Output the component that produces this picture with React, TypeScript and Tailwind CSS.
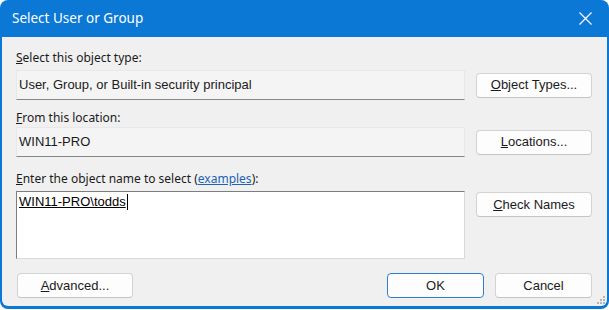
const ui = "font-['Noto_Sans',sans-serif]"
const ms = "font-['Liberation_Sans',Arial,sans-serif]"

function Btn({
  children,
  className = "",
  primary = false,
}: {
  children: React.ReactNode
  className?: string
  primary?: boolean
}) {
  return (
    <div
      className={`h-[25px] flex items-center justify-center rounded-[4px] bg-[#fdfdfd] text-[13px] text-[#1b1b1b] ${ms} ${
        primary ? "border border-[#2f7fcf]" : "border border-[#d3d3d3] border-b-[#c4c4c4]"
      } ${className}`}
    >
      {children}
    </div>
  )
}

function Field({ value }: { value: string }) {
  return (
    <div
      className={`flex-1 h-[30px] flex items-center pl-[2px] bg-[#f4f4f4] border border-[#e8e8e8] border-b-[#878787] text-[13px] text-[#1b1b1b] ${ms}`}
    >
      {value}
    </div>
  )
}

// little dotted size grip in the bottom right corner
function Grip() {
  const dots = [
    [6, 0],
    [3, 3],
    [6, 3],
    [0, 6],
    [3, 6],
    [6, 6],
  ]
  return (
    <svg width="8" height="8" viewBox="0 0 8 8" className="absolute right-[2px] bottom-[2px]">
      {dots.map(([x, y], i) => (
        <rect key={i} x={x} y={y} width="2" height="2" fill="#b5b5b5" />
      ))}
    </svg>
  )
}

export default function App() {
  return (
    <div className="w-[609px] h-[310px] bg-white">
      <div className="w-[609px] h-[309px] flex flex-col rounded-[8px] overflow-hidden bg-[#0a78d4] px-[2px] pb-[3px]">
        {/* title bar */}
        <div className="h-[37px] shrink-0 flex items-center justify-between pl-[10px] pr-[15px] text-white">
          <span className={`${ui} text-[13.5px]`}>Select User or Group</span>
          <svg width="13" height="13" viewBox="0 0 13 13" className="mb-px">
            <path d="M0.5 0.5 L12.5 12.5 M12.5 0.5 L0.5 12.5" stroke="white" strokeWidth="1.2" />
          </svg>
        </div>

        {/* body */}
        <div
          className={`relative flex-1 bg-[#f0f0f0] pl-[14px] pr-[15px] pt-[12px] rounded-b-[6px] ${ui} text-[12px] text-[#1b1b1b]`}
        >
          <div className="h-[17px] leading-[17px]">
            <span className="underline">S</span>elect this object type:
          </div>
          <div className="flex items-center gap-[11px] mt-[4px]">
            <Field value="User, Group, or Built-in security principal" />
            <Btn className="w-[116px]">
              <span className="underline">O</span>bject Types...
            </Btn>
          </div>

          <div className="h-[17px] leading-[17px] mt-[9px]">
            <span className="underline">F</span>rom this location:
          </div>
          <div className="flex items-center gap-[11px] mt-[1px]">
            <Field value="WIN11-PRO" />
            <Btn className="w-[116px]">
              <span className="underline">L</span>ocations...
            </Btn>
          </div>

          <div className="h-[17px] leading-[17px] mt-[13px]">
            <span className="underline">E</span>nter the object name to select (
            <span className="text-[#1a63b8] underline">examples</span>):
          </div>
          <div className="flex items-start gap-[11px] mt-[4px]">
            <div
              className={`flex-1 h-[68px] bg-white border-t border-l border-[#7d7d7d] border-r border-b border-r-[#d9d9d9] border-b-[#d9d9d9] pl-[2px] pt-[1px] text-[13px] text-black ${ms}`}
            >
              <div className="flex items-center h-[17px]">
                <span className="underline">WIN11-PRO\todds</span>
                <span className="inline-block w-px h-[16px] bg-black ml-px" />
              </div>
            </div>
            <Btn className="w-[116px] mt-px">
              <span className="underline">C</span>heck Names
            </Btn>
          </div>

          <div className="flex items-center mt-[14px]">
            <Btn className="w-[116px] ml-px">
              <span className="underline">A</span>dvanced...
            </Btn>
            <div className="flex-1" />
            <Btn primary className="w-[97px]">
              OK
            </Btn>
            <Btn className="w-[97px] ml-[11px]">Cancel</Btn>
          </div>

          <Grip />
        </div>
      </div>
    </div>
  )
}
